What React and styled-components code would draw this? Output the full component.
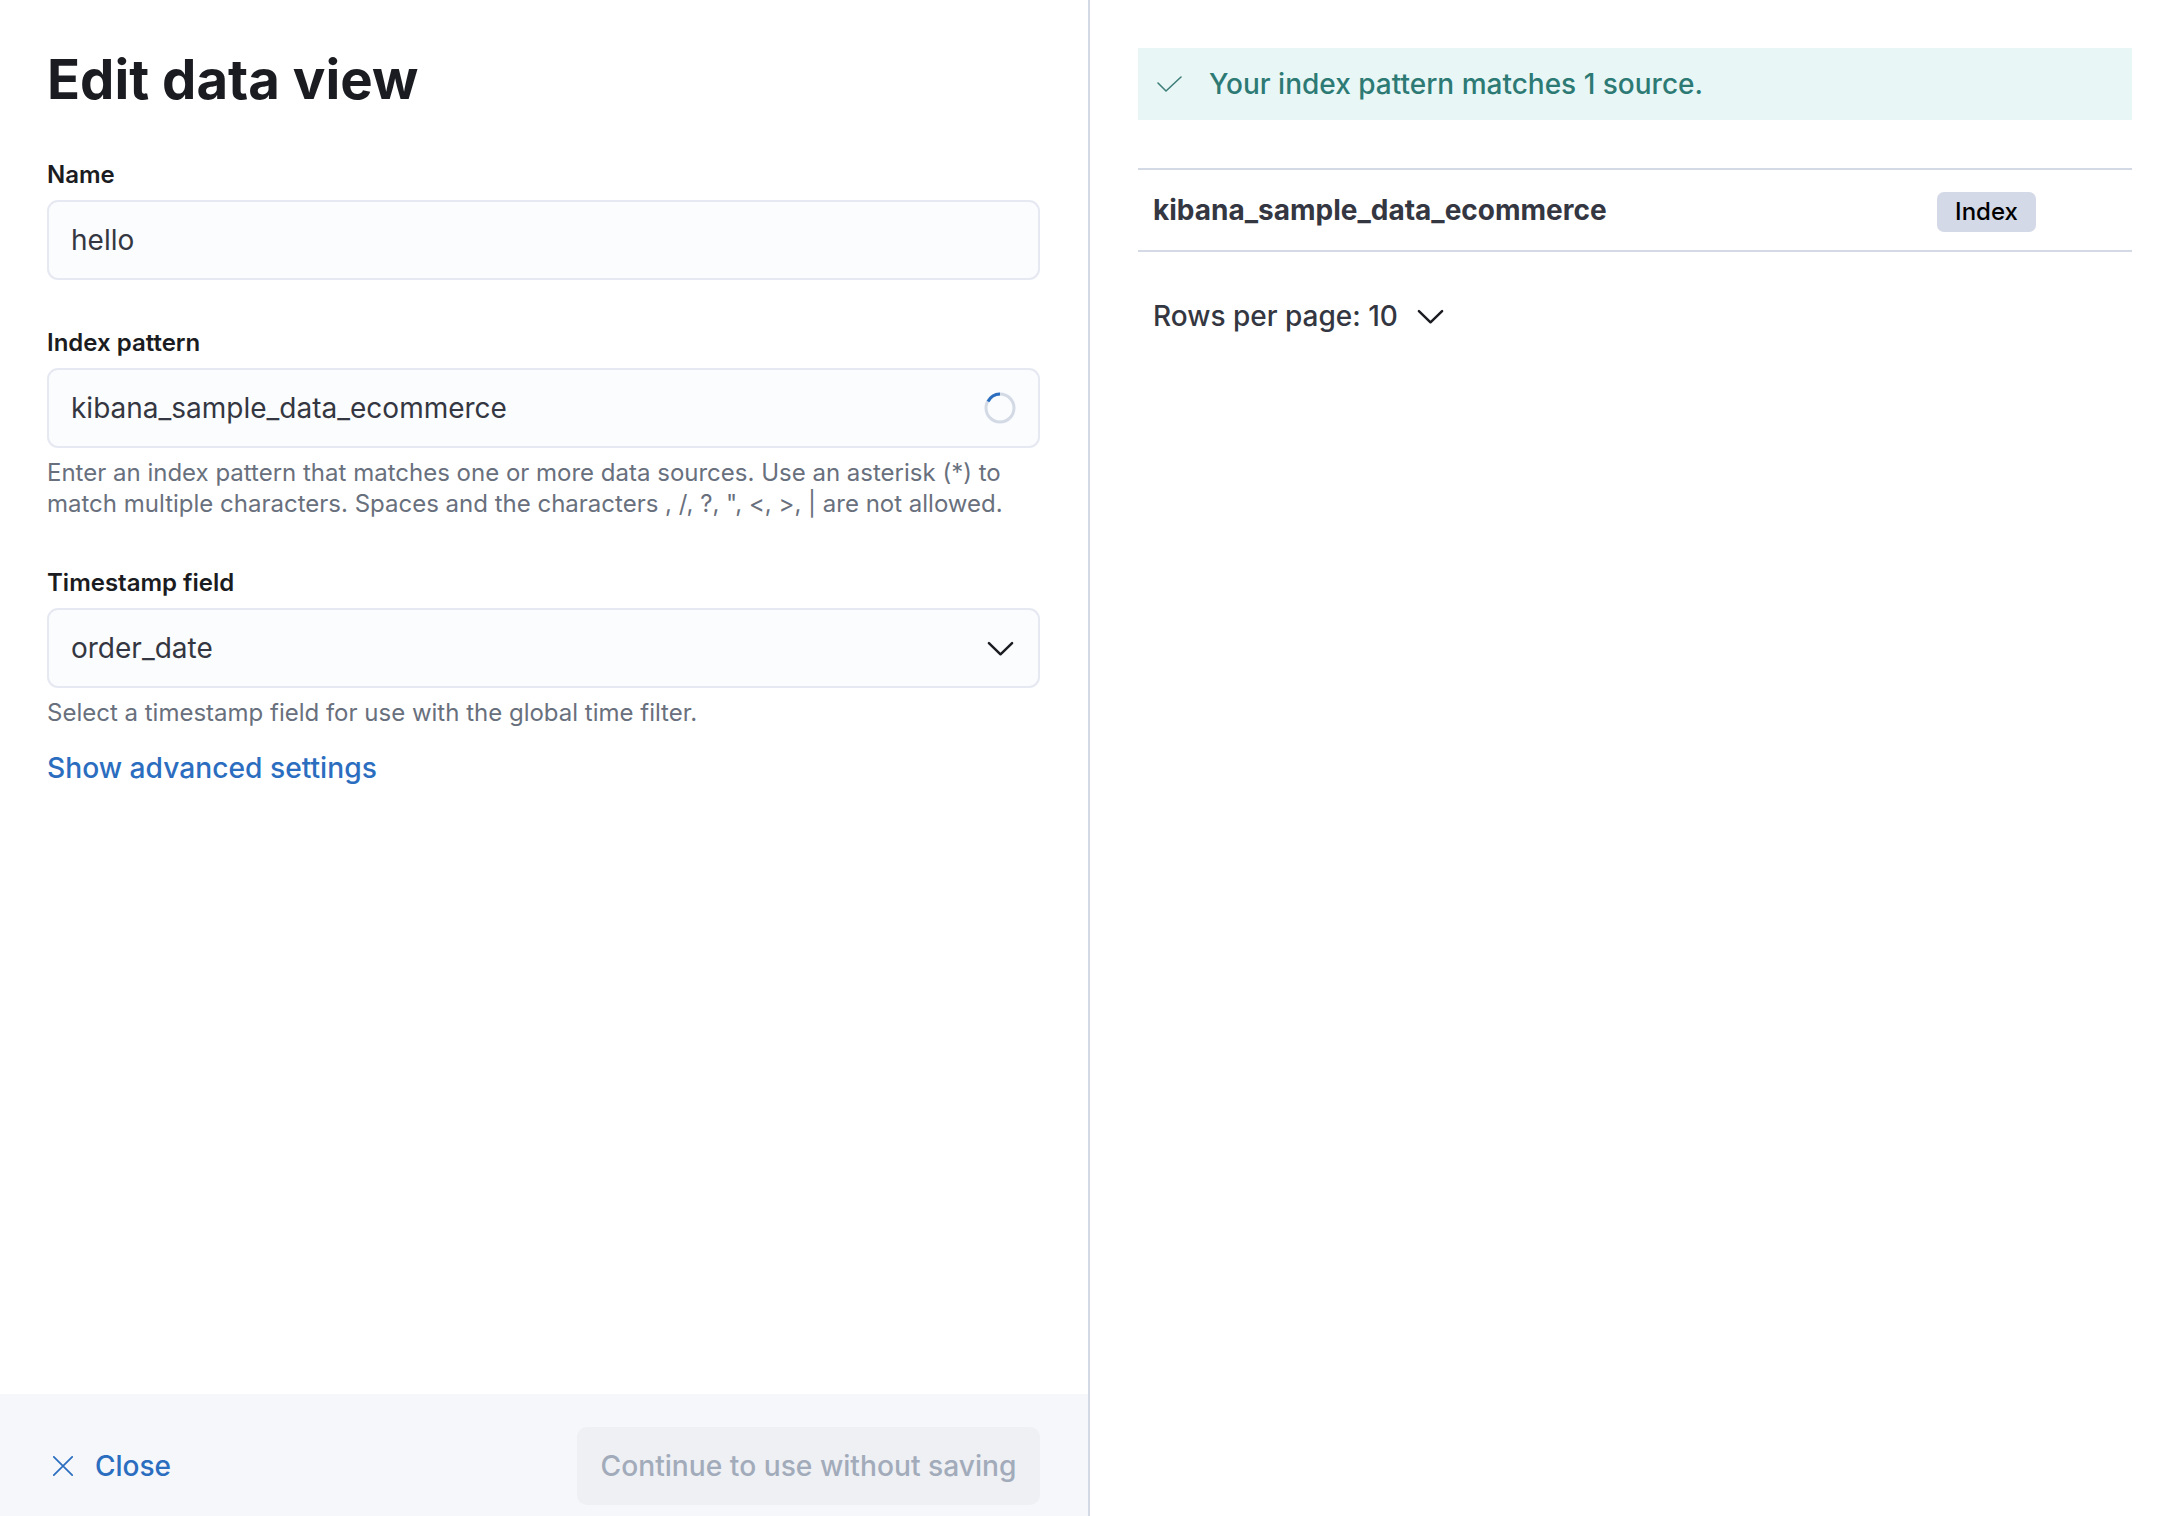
import React from 'react';
import styled, { createGlobalStyle } from 'styled-components';

const GlobalStyle = createGlobalStyle`
  html, body {
    margin: 0;
    padding: 0;
    background: #fff;
    font-family: Inter, "Liberation Sans", sans-serif;
  }
`;

const Page = styled.div`
  display: flex;
  width: 2158px;
  height: 1516px;
  overflow: hidden;
`;

const LeftPanel = styled.div`
  display: flex;
  flex-direction: column;
  width: 1088px;
  border-right: 2px solid #d3dae6;
`;

const Form = styled.div`
  flex: 1;
  padding: 47px 48px 0 47px;
`;

const Title = styled.h1`
  margin: 0 0 49px;
  font-size: 54.5px;
  line-height: 64px;
  font-weight: 700;
  color: #1a1c21;
`;

const Field = styled.div`
  margin-bottom: ${props => props.gap || 0}px;
`;

const Label = styled.div`
  font-size: 24px;
  line-height: 30px;
  font-weight: 600;
  color: #1a1c21;
  margin-bottom: 10px;
`;

const InputBox = styled.div`
  display: flex;
  align-items: center;
  justify-content: space-between;
  box-sizing: border-box;
  height: 80px;
  padding: 0 22px 0 22px;
  background: #fbfcfe;
  border: 2px solid #e6e8f2;
  border-radius: 11px;
  font-size: 28px;
  color: #343741;
`;

const Help = styled.div`
  margin-top: 9px;
  font-size: 24px;
  line-height: 31px;
  color: #69707d;
`;

const Link = styled.a`
  display: block;
  margin-top: 21px;
  font-size: 28.2px;
  line-height: 38px;
  font-weight: 500;
  color: #2b6dbf;
`;

const Spinner = styled.svg`
  width: 32px;
  height: 32px;
  display: block;
`;

const Chevron = styled.svg`
  display: block;
  flex: none;
  margin-right: ${props => props.inset || 0}px;
  width: ${props => props.size}px;
  height: ${props => props.size}px;
`;

const Footer = styled.div`
  display: flex;
  align-items: center;
  justify-content: space-between;
  height: 122px;
  box-sizing: border-box;
  padding: 33px 48px 11px 53px;
  background: #f5f7fb;
`;

const CloseLink = styled.a`
  display: flex;
  align-items: center;
  gap: 22px;
  font-size: 28px;
  font-weight: 500;
  color: #2b6dbf;
`;

const DisabledButton = styled.div`
  display: flex;
  align-items: center;
  justify-content: center;
  width: 463px;
  height: 78px;
  border-radius: 10px;
  background: #eef0f4;
  color: #a2abba;
  font-size: 28.2px;
  font-weight: 500;
`;

const RightPanel = styled.div`
  flex: 1;
  padding: 48px 26px 0 48px;
`;

const Banner = styled.div`
  display: flex;
  align-items: center;
  gap: 27px;
  height: 72px;
  padding-left: 19px;
  background: #e8f6f6;
  color: #2d7a75;
  font-size: 28px;
  font-weight: 500;
`;

const ResultRow = styled.div`
  display: flex;
  align-items: center;
  justify-content: space-between;
  box-sizing: border-box;
  height: 84px;
  margin-top: 48px;
  padding: 0 96px 0 15px;
  border-top: 2px solid #d3dae6;
  border-bottom: 2px solid #d3dae6;
`;

const SourceName = styled.div`
  font-size: 28px;
  font-weight: 700;
  color: #343741;
`;

const Badge = styled.div`
  display: flex;
  align-items: center;
  justify-content: center;
  width: 99px;
  height: 40px;
  margin-top: 3px;
  border-radius: 7px;
  background: #d3d9e6;
  color: #000;
  font-size: 24px;
  font-weight: 500;
`;

const RowsPerPage = styled.div`
  display: flex;
  align-items: center;
  gap: 19px;
  margin-top: 44px;
  padding-left: 15px;
  font-size: 28px;
  line-height: 40px;
  font-weight: 500;
  color: #343741;
`;

const ChevronIcon = ({ size, inset }) => (
  <Chevron size={size} inset={inset} viewBox="0 0 28 28" fill="none">
    <path d="M2 8.5 14 20 26 8.5" stroke="#1a1c21" strokeWidth="2.6" strokeLinecap="round" strokeLinejoin="round" />
  </Chevron>
);

export default function App() {
  return (
    <Page>
      <GlobalStyle />
      <LeftPanel>
        <Form>
          <Title>Edit data view</Title>
          <Field gap={48}>
            <Label>Name</Label>
            <InputBox>hello</InputBox>
          </Field>
          <Field gap={49}>
            <Label>Index pattern</Label>
            <InputBox>
              kibana_sample_data_ecommerce
              <Spinner viewBox="0 0 32 32" fill="none">
                <circle cx="16" cy="16" r="14" stroke="#d3dae6" strokeWidth="3" />
                <path d="M4 9.5A14 14 0 0 1 16 2" stroke="#2b6dbf" strokeWidth="3" />
              </Spinner>
            </InputBox>
            <Help>
              Enter an index pattern that matches one or more data sources. Use an asterisk (*) to
              <br />
              match multiple characters. Spaces and the characters , /, ?, ", &lt;, &gt;, | are not allowed.
            </Help>
          </Field>
          <Field>
            <Label>Timestamp field</Label>
            <InputBox>
              order_date
              <ChevronIcon size={27} inset={2} />
            </InputBox>
            <Help>Select a timestamp field for use with the global time filter.</Help>
          </Field>
          <Link>Show advanced settings</Link>
        </Form>
        <Footer>
          <CloseLink>
            <svg width="20" height="20" viewBox="0 0 20 20" fill="none">
              <path d="M.8.8 19.2 19.2M19.2.8.8 19.2" stroke="#2b6dbf" strokeWidth="1.7" strokeLinecap="round" />
            </svg>
            Close
          </CloseLink>
          <DisabledButton>Continue to use without saving</DisabledButton>
        </Footer>
      </LeftPanel>
      <RightPanel>
        <Banner>
          <svg width="25" height="16" viewBox="0 0 25 16" fill="none">
            <path d="M1 7 9 15 24 1" stroke="#3f7f7a" strokeWidth="1.6" strokeLinecap="round" strokeLinejoin="round" />
          </svg>
          Your index pattern matches 1 source.
        </Banner>
        <ResultRow>
          <SourceName>kibana_sample_data_ecommerce</SourceName>
          <Badge>Index</Badge>
        </ResultRow>
        <RowsPerPage>
          Rows per page: 10
          <ChevronIcon size={27} />
        </RowsPerPage>
      </RightPanel>
    </Page>
  );
}
